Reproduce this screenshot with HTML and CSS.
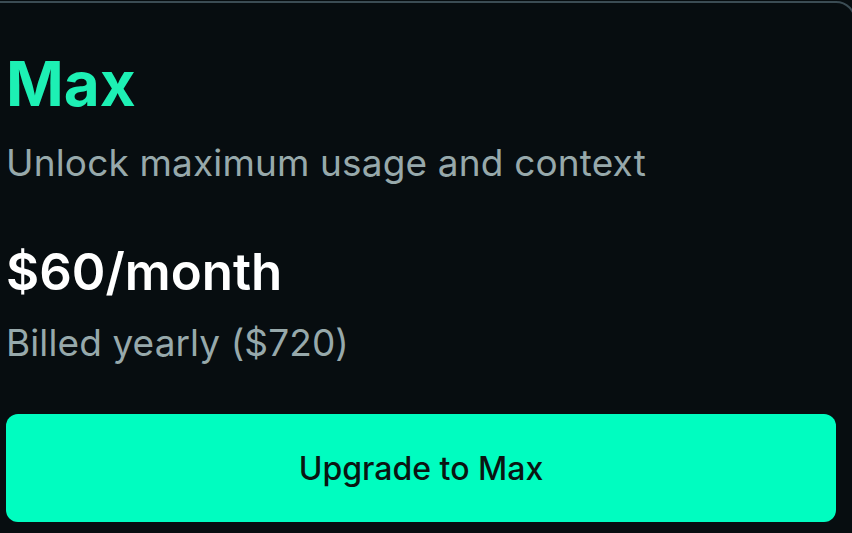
FILE: index.html
```html
<!DOCTYPE html>
<html>
<head>
<meta charset="utf-8">
<link rel="stylesheet" href="styles.css">
</head>
<body>
<div class="card">
  <h2 class="plan-name">Max</h2>
  <p class="plan-desc">Unlock maximum usage and context</p>
  <div class="price">$60/month</div>
  <p class="billing">Billed yearly ($720)</p>
  <button class="cta">Upgrade to Max</button>
</div>
</body>
</html>
```
FILE: styles.css
```css
html, body {
  margin: 0;
  padding: 0;
  background: #070d10;
  height: 100%;
  overflow: hidden;
}
body {
  font-family: Inter, "Noto Sans", sans-serif;
}
.card {
  margin: 1px -4px 0 -30px;
  border: 2px solid #3b4c54;
  border-radius: 20px;
  background: #070d10;
  padding: 49px 18px 30px 34px;
}
.plan-name {
  margin: 0;
  font-size: 62px;
  line-height: 64px;
  font-weight: 700;
  color: #1df0b4;
}
.plan-desc {
  margin: 25px 0 0;
  font-size: 37px;
  line-height: 44px;
  letter-spacing: 0.15px;
  color: #97a9ab;
}
.price {
  margin-top: 57px;
  font-size: 51px;
  line-height: 60px;
  font-weight: 600;
  color: #ffffff;
}
.billing {
  margin: 19px 0 0;
  font-size: 37px;
  line-height: 44px;
  letter-spacing: 0.1px;
  color: #97a9ab;
}
.cta {
  display: block;
  width: 100%;
  margin-top: 49px;
  height: 108px;
  border: none;
  border-radius: 12px;
  background: #00fdc0;
  color: #0a1512;
  font-family: Inter, "Noto Sans", sans-serif;
  font-size: 32px;
  font-weight: 500;
}
```
